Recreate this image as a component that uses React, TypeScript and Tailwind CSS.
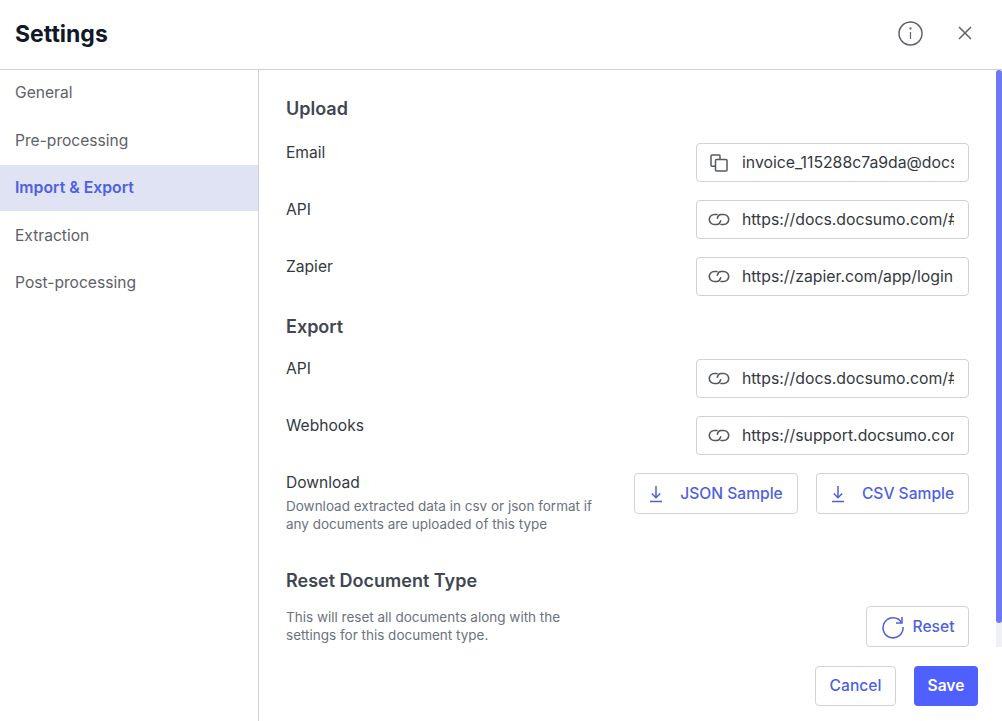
import React from "react";

const Copy = () => (
  <svg width="18" height="18" viewBox="0 0 18 18" fill="none" stroke="#55595f" strokeWidth="1.5" className="shrink-0">
    <path d="M5 12.2H2a1 1 0 0 1-1-1V2a1 1 0 0 1 1-1h7a1 1 0 0 1 1 1v3" />
    <rect x="5.5" y="5.5" width="11.5" height="11.5" rx="1" />
  </svg>
);
const LinkIco = () => (
  <svg width="22" height="13" viewBox="0 0 22 13" fill="none" stroke="#55595f" strokeWidth="1.6" strokeLinecap="round" className="shrink-0">
    <path d="M9 1.5H6.3a5 5 0 0 0 0 10H9c2 0 3.2-2 3.6-3.6" />
    <path d="M13 11.5h2.7a5 5 0 0 0 0-10H13c-2 0-3.2 2-3.6 3.6" />
  </svg>
);
const Down = () => (
  <svg width="14" height="18" viewBox="0 0 14 18" fill="none" stroke="#4f5fe0" strokeWidth="1.5" className="shrink-0">
    <path d="M7 1v11.5M2.8 8.5 7 12.7l4.2-4.2M1 16.5h12" />
  </svg>
);
const Field = ({ label, value, icon }: { label: string; value: string; icon: React.ReactNode }) => (
  <div className="flex justify-between h-[40px]">
    <div className="text-[15.6px] leading-[20px] text-[#33393f]">{label}</div>
    <div className="w-[273px] h-[39px] border border-[#d0d2d6] rounded-[4px] flex items-center pl-[11px] pr-[14px] gap-[12px] bg-white">
      <span className="w-[22px] flex justify-center shrink-0">{icon}</span>
      <span className="overflow-hidden whitespace-nowrap text-[15.8px] text-[#33393f]">{value}</span>
    </div>
  </div>
);
const Nav = ({ label, active }: { label: string; active?: boolean }) => (
  <div className={`h-[46px] flex items-center pl-[15px] ${active ? "text-[15.8px] bg-[#e0e3f4] text-[#4f5fe0] font-semibold" : "text-[15.6px] text-[#5d6168]"}`}>{label}</div>
);
const OutBtn = ({ children, cls }: { children: React.ReactNode; cls: string }) => (
  <button className={`flex items-center justify-center border border-[#d0d2d6] rounded-[4px] text-[15.6px] font-medium text-[#4f5fe0] bg-white ${cls}`}>{children}</button>
);

export default function App() {
  return (
    <div className="w-[1002px] h-[721px] bg-white overflow-hidden flex flex-col font-['Inter',sans-serif]">
      <header className="h-[70px] border-b border-[#cfd1d4] flex items-center justify-between pl-[15px] pr-[30px] pb-[3px] shrink-0">
        <h1 className="text-[23px] font-bold text-[#111827] mt-[2px]">Settings</h1>
        <div className="flex items-center gap-[35px]">
          <svg width="25" height="25" viewBox="0 0 25 25" fill="none" stroke="#5f6368" strokeWidth="1.5">
            <circle cx="12.5" cy="12.5" r="11.5" />
            <path d="M12.5 11v7" strokeWidth="1.2" />
            <circle cx="12.5" cy="7.5" r="0.4" fill="#5f6368" />
          </svg>
          <svg width="14" height="14" viewBox="0 0 14 14" fill="none" stroke="#5f6368" strokeWidth="1.5">
            <path d="M1 1l12 12M13 1 1 13" />
          </svg>
        </div>
      </header>
      <div className="flex flex-1 min-h-0">
        <aside className="w-[259px] border-r border-[#cfd1d4] shrink-0 flex flex-col gap-[1.5px]">
          <Nav label="General" />
          <Nav label="Pre-processing" />
          <Nav label="Import & Export" active />
          <Nav label="Extraction" />
          <Nav label="Post-processing" />
        </aside>
        <div className="flex-1 flex flex-col min-w-0">
          <div className="flex h-[577px]">
            <main className="flex-1 pl-[27px] pr-[27px] pt-[27px] overflow-hidden">
              <h2 className="text-[18px] leading-[24px] font-semibold text-[#404752] mb-[22px]">Upload</h2>
              <div className="flex flex-col gap-[17px]">
                <Field label="Email" value="invoice_115288c7a9da@docsumo.com" icon={<Copy />} />
                <Field label="API" value="https://docs.docsumo.com/#section" icon={<LinkIco />} />
                <Field label="Zapier" value="https://zapier.com/app/login?next=" icon={<LinkIco />} />
              </div>
              <h2 className="text-[18px] leading-[24px] font-semibold text-[#404752] mt-[18px] mb-[20px]">Export</h2>
              <div className="flex flex-col gap-[17px]">
                <Field label="API" value="https://docs.docsumo.com/#section" icon={<LinkIco />} />
                <Field label="Webhooks" value="https://support.docsumo.com/docs" icon={<LinkIco />} />
              </div>
              <div className="flex justify-between mt-[17px]">
                <div className="w-[320px]">
                  <div className="text-[15.6px] leading-[20px] text-[#33393f]">Download</div>
                  <p className="text-[13.5px] leading-[18px] text-[#6b7280] mt-[4px]">Download extracted data in csv or json format if any documents are uploaded of this type</p>
                </div>
                <div className="flex gap-[18px] h-[41px]">
                  <OutBtn cls="w-[164px] gap-[17px]"><Down />JSON Sample</OutBtn>
                  <OutBtn cls="w-[153px] gap-[17px]"><Down />CSV Sample</OutBtn>
                </div>
              </div>
              <h2 className="text-[18px] leading-[24px] font-semibold text-[#404752] mt-[36px]">Reset Document Type</h2>
              <div className="flex justify-between mt-[13px]">
                <p className="w-[320px] text-[13.5px] leading-[18px] text-[#6b7280] mt-[2px]">This will reset all documents along with the settings for this document type.</p>
                <OutBtn cls="w-[103px] h-[41px] gap-[8px]">
                  <svg width="24" height="24" viewBox="0 0 24 24" fill="none" stroke="#4f5fe0" strokeWidth="1.5">
                    <path d="M20.5 7.5A10 10 0 1 0 22 12" />
                    <path d="M21 2v6h-6" />
                  </svg>
                  Reset
                </OutBtn>
              </div>
            </main>
            <div className="w-[6px] shrink-0 bg-[#f0f1f6]">
              <div className="h-[553px] bg-[#6d78f7] rounded-[3px]" />
            </div>
          </div>
          <footer className="flex justify-end gap-[18px] pr-[24px] pt-[19px]">
            <button className="w-[81px] h-[40px] border border-[#d0d2d6] rounded-[4px] text-[15.6px] font-medium text-[#4f5fe0] bg-white">Cancel</button>
            <button className="w-[64px] h-[40px] rounded-[4px] text-[15.6px] font-semibold text-white bg-[#4f60ff]">Save</button>
          </footer>
        </div>
      </div>
    </div>
  );
}
